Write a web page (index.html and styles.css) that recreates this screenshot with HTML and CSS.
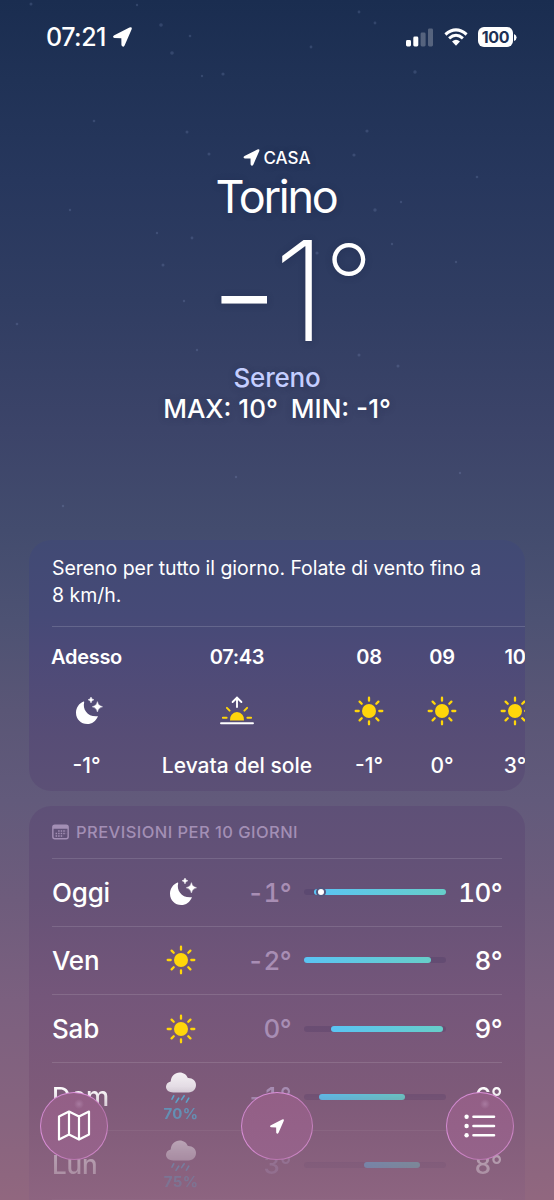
FILE: index.html
```html
<!DOCTYPE html>
<html lang="it">
<head>
<meta charset="utf-8">
<title>Meteo</title>
<link rel="stylesheet" href="styles.css">
</head>
<body>
<svg width="0" height="0" class="defs">
  <defs>
    <linearGradient id="cloudFill" x1="0" y1="0" x2="0" y2="1"><stop offset="0" stop-color="#f4f0f4"/><stop offset="1" stop-color="#ddd4de"/></linearGradient>
    <symbol id="arrow" viewBox="0 0 18 19"><path d="M1.2 7.8 15.6.5Q18.6-.5 17.6 2.4L11 17.6Q9.5 20 8 17.4L7.9 10.7 1.3 10.5Q-1.2 9.4 1.2 7.8Z" fill="#fff"/></symbol>
    <symbol id="sun" viewBox="-15 -15 30 30"><circle r="7" fill="#ffd60a"/><path d="M0-13.3V-10.3M0 13.3V10.3M-13.3 0H-10.3M13.3 0H10.3M-9.4-9.4-7.3-7.3M9.4-9.4 7.3-7.3M-9.4 9.4-7.3 7.3M9.4 9.4 7.3 7.3" stroke="#ffd60a" stroke-width="2.3" stroke-linecap="round"/></symbol>
    <symbol id="moon" viewBox="0 0 28 28"><path d="M9.2 4.9C7.2 12.5 13 20.5 23 19.2 20.8 24.2 17 27 12.3 27 6 27 1 22.3 1 15.7 1 10.4 4.4 5.9 8.6 4.4Q9.2 4.3 9.2 4.9Z" fill="#fff"/><path d="M16-.4Q16.4 2.4 19 2.8 16.4 3.2 16 6 15.6 3.2 13 2.8 15.6 2.4 16-.4ZM22.4 4.6Q23.1 9.1 27.6 9.8 23.1 10.5 22.4 15 21.7 10.5 17.2 9.8 21.7 9.1 22.4 4.6Z" fill="#fff" stroke="#fff" stroke-width=".4"/></symbol>
    <symbol id="rain" viewBox="0 0 30 32"><path d="M7.2 20.5C3 20.5 0 18.2 0 14.8 0 12 2 9.9 4.7 9.4 5.1 4 8.8.5 13.7.5 17.6.5 20.6 2.7 21.9 6.1 26.6 5.9 30 9 30 13.1 30 17.4 26.9 20.5 22.6 20.5Z" fill="url(#cloudFill)"/><path d="M7.7 23.8 6 27.2M12.7 26.2 10 30.4M18.2 23.8 15.6 27.6M22.8 26.2 20.4 30.2" stroke="#55b5dd" stroke-width="1.6" stroke-linecap="round"/></symbol>
  </defs>
</svg>
<main class="screen">
  <svg class="stars" viewBox="0 0 554 540" fill="#9db0df">
    <circle cx="31" cy="4" r="1.5"/><circle cx="161" cy="25" r="1.8"/><circle cx="190" cy="36" r="1.3"/><circle cx="172" cy="53" r="1.8"/><circle cx="223" cy="74" r="1.6"/><circle cx="202" cy="76" r="1.2"/><circle cx="137" cy="5" r="1.2"/><circle cx="359" cy="12" r="1.4"/><circle cx="375" cy="23" r="1.4"/><circle cx="311" cy="47" r="1.4"/><circle cx="415" cy="72" r="1.7"/><circle cx="187" cy="132" r="1.5"/><circle cx="209" cy="154" r="1.5"/><circle cx="354" cy="155" r="1.6"/><circle cx="367" cy="131" r="1.6"/><circle cx="375" cy="210" r="1.7"/><circle cx="401" cy="202" r="1.2"/><circle cx="192" cy="238" r="1.4"/><circle cx="157" cy="233" r="1.2"/><circle cx="163" cy="265" r="1.5"/><circle cx="317" cy="253" r="1.6"/><circle cx="392" cy="244" r="1.2"/><circle cx="184" cy="301" r="1.2"/><circle cx="359" cy="355" r="1.5"/><circle cx="398" cy="366" r="1.5"/><circle cx="197" cy="350" r="1.2"/><circle cx="17" cy="324" r="1.3"/><circle cx="70" cy="210" r="1.2"/><circle cx="94" cy="121" r="1.3"/><circle cx="477" cy="177" r="1.3"/><circle cx="456" cy="262" r="1.2"/><circle cx="236" cy="477" r="1.2"/><circle cx="460" cy="473" r="1.2"/><circle cx="63" cy="506" r="1.2"/>
  </svg>
  <header class="status">
    <div class="clock">07:21<svg class="clock-arrow"><use href="#arrow"/></svg></div>
    <div class="signals">
      <svg class="cell" viewBox="0 0 28 19" fill="#fff"><rect x="0" y="12" width="5" height="6.5" rx="1.4"/><rect x="7.3" y="8.6" width="5" height="9.9" rx="1.4"/><g opacity=".25"><rect x="14.6" y="4.6" width="5" height="13.9" rx="1.4"/><rect x="22" y="0.5" width="5" height="18" rx="1.4"/></g></svg>
      <svg class="wifi" viewBox="0 0 24 18" fill="none" stroke="#fff" stroke-width="3"><path d="M1.4 6.5Q12-2.8 22.6 6.5"/><path d="M5.1 10.3Q12 4.2 18.9 10.3"/><path d="M12 17.8 8 13.6Q12 10 16 13.6Z" fill="#fff" stroke="none"/></svg>
      <div class="battery"><span class="level">100</span><svg class="nub" viewBox="0 0 3 7"><path d="M0 0Q2.6 1 2.6 3.5T0 7Z" fill="#fff"/></svg></div>
    </div>
  </header>
  <section class="hero">
    <div class="place"><svg class="place-arrow"><use href="#arrow"/></svg>CASA</div>
    <h1 class="city">Torino</h1>
    <div class="now"><span class="minus">–</span><span class="digit">1</span><span class="degree">°</span></div>
    <div class="condition">Sereno</div>
    <div class="range"><span>MAX: 10°</span><span>MIN: -1°</span></div>
  </section>
  <section class="card hourly">
    <p class="summary">Sereno per tutto il giorno. Folate di vento fino a 8 km/h.</p>
    <div class="hours">
      <div class="hour first"><b>Adesso</b><svg class="moon"><use href="#moon"/></svg><span>-1°</span></div>
      <div class="hour rise"><b>07:43</b>
        <svg class="sunrise" viewBox="0 0 34 30" fill="none" stroke-linecap="round"><path d="M10 24.4A7.1 7.1 0 1 1 24 24.4Z" fill="#ffd60a"/><path d="M2.9 21.7H6.6M27.4 21.7H31.1M6.9 11.9 9.6 14.6M27.1 11.9 24.4 14.6" stroke="#ffd60a" stroke-width="2"/><path d="M1 27.2H33M17 11V2M12.6 6 17 1.7 21.4 6" stroke="#fff" stroke-width="1.9"/></svg>
        <span>Levata del sole</span></div>
      <div class="hour"><b>08</b><svg class="sun"><use href="#sun"/></svg><span>-1°</span></div>
      <div class="hour"><b>09</b><svg class="sun"><use href="#sun"/></svg><span>0°</span></div>
      <div class="hour"><b>10</b><svg class="sun"><use href="#sun"/></svg><span>3°</span></div>
    </div>
  </section>
  <section class="card daily">
    <h2 class="heading"><svg class="calendar" viewBox="0 0 18 16"><path fill="none" stroke="currentColor" stroke-width="1.5" d="M3 .9H15Q17.1.9 17.1 3V13Q17.1 15.1 15 15.1H3Q.9 15.1.9 13V3Q.9.9 3 .9Z"/><path fill="currentColor" d="M1 1H17V4.6H1Z"/><path d="M6.5 7H15M3.8 9.6H15M3.8 12.2H12" stroke="currentColor" stroke-width="1.5" stroke-dasharray="1.6 1.1"/></svg>PREVISIONI PER 10 GIORNI</h2>
    <div class="day"><span class="name">Oggi</span><span class="sky"><svg class="moon"><use href="#moon"/></svg></span><span class="low">-1°</span><span class="track"><i class="fill" style="margin-left:9.5px;width:132.5px"></i><i class="dot"></i></span><span class="high">10°</span></div>
    <div class="day"><span class="name">Ven</span><span class="sky"><svg class="sun"><use href="#sun"/></svg></span><span class="low">-2°</span><span class="track"><i class="fill" style="margin-left:0;width:126.5px"></i></span><span class="high">8°</span></div>
    <div class="day"><span class="name">Sab</span><span class="sky"><svg class="sun"><use href="#sun"/></svg></span><span class="low">0°</span><span class="track"><i class="fill" style="margin-left:27px;width:112px"></i></span><span class="high">9°</span></div>
    <div class="day"><span class="name">Dom</span><span class="sky"><svg class="rain"><use href="#rain"/></svg><em>70%</em></span><span class="low">-1°</span><span class="track"><i class="fill" style="margin-left:14.5px;width:86px"></i></span><span class="high">6°</span></div>
    <div class="day"><span class="name">Lun</span><span class="sky"><svg class="rain"><use href="#rain"/></svg><em>75%</em></span><span class="low">3°</span><span class="track"><i class="fill" style="margin-left:60px;width:56px"></i></span><span class="high">8°</span></div>
  </section>
  <nav class="dock">
    <div class="button"><svg width="34" height="32" viewBox="0 0 34 32" fill="none" stroke="#fff" stroke-width="2.2" stroke-linejoin="round"><path d="M2 6.6 12 1.6 22 6.6 32 1.6V24.6L22 29.6 12 24.6 2 29.6ZM12 1.6V24.6M22 6.6V29.6"/></svg></div>
    <div class="button wide"><svg width="14" height="15"><use href="#arrow"/></svg></div>
    <div class="button"><svg width="32" height="24" viewBox="0 0 32 24" fill="#fff" stroke="#fff" stroke-width="2.6" stroke-linecap="round"><path d="M9.5 2.7H30M9.5 12H30M9.5 21.3H30"/><g stroke="none"><circle cx="2.6" cy="2.7" r="2.2"/><circle cx="2.6" cy="12" r="2.2"/><circle cx="2.6" cy="21.3" r="2.2"/></g></svg></div>
  </nav>
</main>
</body>
</html>
```
FILE: styles.css
```css
* { box-sizing: border-box; }
body { margin: 0; background: #1b2e52; font-family: Inter, "Liberation Sans", sans-serif; color: #fff; }
.defs { position: absolute; }
.screen {
  position: relative; width: 554px; height: 1200px; overflow: hidden;
  background: linear-gradient(#1a2d50 0, #203256 80px, #27375d 180px, #303d62 300px, #3c4469 430px, #434c6e 530px, #4d5273 620px, #5a5676 710px, #625a7b 800px, #6e5c7c 900px, #7b607f 1000px, #85637f 1100px, #91677f 1200px);
}
.stars { position: absolute; left: 0; top: 0; width: 554px; height: 540px; opacity: .18; }
.status { display: flex; justify-content: space-between; align-items: center; height: 74px; padding: 0 37px 0 46px; position: relative; }
.clock { display: flex; align-items: center; font-size: 25px; font-weight: 500; letter-spacing: -.5px; }
.clock-arrow { width: 19px; height: 20px; margin-left: 7px; }
.signals { display: flex; align-items: center; }
.cell { width: 28px; height: 19px; margin-right: 10px; }
.wifi { width: 24px; height: 18px; margin-right: 10px; }
.battery { display: flex; align-items: center; gap: 1px; }
.level { width: 35px; height: 20px; border-radius: 6px; background: #fff; color: #1d3055; font-size: 16px; line-height: 20px; font-weight: 700; text-align: center; letter-spacing: -.4px; }
.nub { width: 3px; height: 7px; }
.hero { position: relative; height: 466px; padding-top: 73px; display: flex; flex-direction: column; align-items: center; text-shadow: 0 1px 7px #1a244455; }
.place { display: flex; align-items: center; height: 22px; font-size: 17px; font-weight: 500; }
.place-arrow { width: 17px; height: 17px; margin: -1px 3px 0 0; }
.city { margin: 0 0 5px -2px; height: 53px; line-height: 56px; font-size: 45px; font-weight: 400; letter-spacing: -2.3px; }
.now { display: grid; grid-template-columns: 57px 51px 40px; height: 135px; padding-top: 11px; width: 148px; margin-left: 35px; font-weight: 200; font-size: 139px; line-height: 106px; }
.minus { font-size: 91px; padding-top: 4px; font-weight: 380; margin-left: 1px; }
.digit { margin-left: -4px; font-weight: 180; }
.degree { font-size: 107px; line-height: 91px; font-weight: 240; margin-left: -4px; }
.condition { height: 32px; line-height: 32px; font-size: 26px; font-weight: 450; color: #c4ceff; letter-spacing: -.2px; }
.range { display: flex; gap: 13px; line-height: 29px; font-size: 26px; font-weight: 450; letter-spacing: 0; }
.card { position: relative; margin: 0 29px; border-radius: 22px; overflow: hidden; }
.hourly { height: 251px; background: linear-gradient(#414a74, #464a77 30%, #4c4a78 45%, #574d76 78%, #5c5076); }
.summary { margin: 0 0 0 23px; padding: 15px 30px 0 0; height: 87px; border-bottom: 1px solid #ffffff28; font-size: 19.5px; line-height: 27px; letter-spacing: -.04px; }
.hours { display: flex; gap: 41px; padding: 18px 0 0 23px; }
.hour { flex: none; width: 32px; display: flex; flex-direction: column; align-items: center; font-size: 21px; font-weight: 480; white-space: nowrap; }
.hour b { font-size: 20px; line-height: 24px; font-weight: 580; letter-spacing: -.3px; }
.hour svg { flex: none; margin: 27px 0 25px; height: 30px; }
.hour span { line-height: 30px; }
.first { width: 69px; }
.rise { width: 150px; }
.sun { width: 30px; height: 30px; }
.hour .moon, .moon { width: 28px; height: 28px; }
.hour .moon { margin: 28px 0 26px 4px; }
.sunrise { width: 34px; }
.daily { margin-top: 15px; height: 420px; padding: 0 23px; background: linear-gradient(#5e5077, #665277 90px, #74567a 190px, #7e5a79 290px, #8d6480 394px); border-radius: 22px 22px 0 0; }
.heading { display: flex; align-items: center; gap: 7px; height: 52.6px; margin: 0; border-bottom: 1px solid #ffffff20; color: #a38fb5; font-size: 16.5px; font-weight: 450; letter-spacing: .45px; }
.calendar { width: 17px; height: 16px; }
.day { display: flex; align-items: center; height: 68.2px; border-bottom: 1px solid #ffffff20; font-size: 26px; font-weight: 480; letter-spacing: -.2px; }
.name { width: 99px; }
.sky { width: 60px; display: flex; flex-direction: column; align-items: center; }
.sky .moon { margin-left: 3px; }
.rain { width: 30px; height: 32px; margin-top: 2px; }
.sky em { font-style: normal; font-size: 15px; line-height: 18px; margin-top: 1px; font-weight: 700; color: #57a8cf; letter-spacing: .4px; }
.low, .high { font-variant-numeric: tabular-nums; font-size: 26px; letter-spacing: -.6px; }
.low { width: 80px; text-align: right; color: #a88eb4; }
.track { position: relative; width: 142px; height: 6px; margin-left: 13px; border-radius: 3px; background: #38285833; }
.fill { display: block; height: 6px; border-radius: 3px; background: linear-gradient(90deg, #5ac4f4, #67cec9); }
.dot { position: absolute; left: 12px; top: -2px; width: 10px; height: 10px; border-radius: 50%; background: #fff; border: 2px solid #54557d; }
.high { flex: 1; text-align: right; }
.day:nth-of-type(4) { -webkit-mask: linear-gradient(#000 35%, #000b 60%, #0009 97%, #0005); mask: linear-gradient(#000 35%, #000b 60%, #0009 97%, #0005); }
.day:nth-of-type(5) { -webkit-mask: linear-gradient(#0008, #0003 90%); mask: linear-gradient(#0008, #0003 90%); }
.dock { position: absolute; left: 40px; right: 40px; top: 1092px; display: flex; justify-content: space-between; }
.button { width: 68px; height: 68px; border-radius: 50%; display: grid; place-items: center; border: 1.5px solid transparent; background: radial-gradient(circle at 38px 11px, #a87aa0, #a87aa000 5px) padding-box, linear-gradient(#935f86, #95638a) padding-box, linear-gradient(125deg, #c683c5, #df91dc 35%, #b875ae 70%, #e59ae1) border-box; }
.wide { width: 72px; background: linear-gradient(#935f86, #95638a) padding-box, linear-gradient(125deg, #c683c5, #df91dc 35%, #b875ae 70%, #e59ae1) border-box; }
```
